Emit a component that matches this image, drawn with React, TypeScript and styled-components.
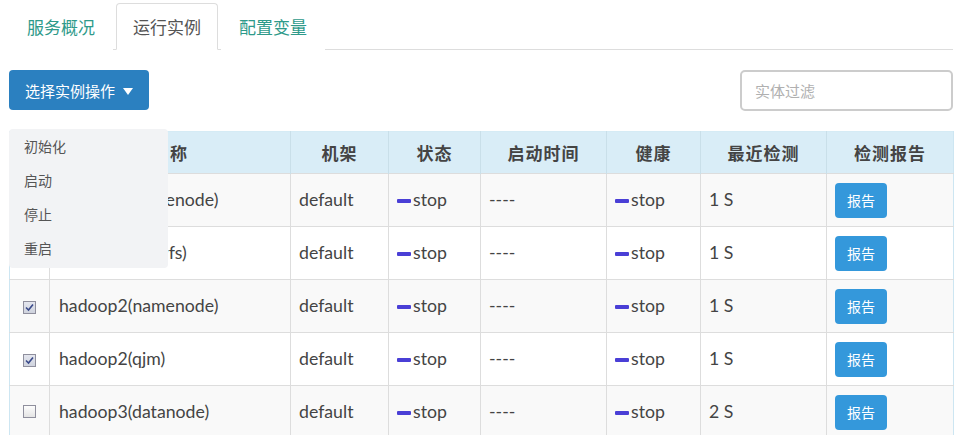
import React from "react";
import styled, { createGlobalStyle } from "styled-components";

const Global = createGlobalStyle`
  html, body { margin: 0; padding: 0; background: #fff; }
  body { font-family: Lato, "Noto Sans CJK SC", sans-serif; color: #333; }
  * { box-sizing: border-box; }
`;

const Page = styled.div`
  padding: 3px 2px 0 9px;
  width: 955px;
`;

const TabBar = styled.div`
  display: flex;
  gap: 3px;
  border-bottom: 1px solid #ddd;
  height: 47px;
`;

const Tab = styled.div<{ $active?: boolean; $width: number }>`
  width: ${(p) => p.$width}px;
  height: 47px;
  display: flex;
  align-items: center;
  justify-content: center;
  font-size: 17px;
  font-family: "Noto Sans CJK SC", sans-serif;
  color: ${(p) => (p.$active ? "#555" : "#2e9a8a")};
  border: 1px solid ${(p) => (p.$active ? "#ddd" : "transparent")};
  border-bottom-color: ${(p) => (p.$active ? "#fff" : "transparent")};
  border-radius: 4px 4px 0 0;
  background: #fff;
  margin-bottom: -1px;
  padding-bottom: 1px;
`;

const Toolbar = styled.div`
  position: relative;
  display: flex;
  justify-content: space-between;
  align-items: flex-start;
  margin-top: 20px;
`;

const ActionButton = styled.button`
  height: 40px;
  width: 140px;
  border: none;
  border-radius: 4px;
  background: #2b80c0;
  color: #fff;
  font-family: "Noto Sans CJK SC", sans-serif;
  font-size: 15px;
  display: flex;
  align-items: center;
  padding: 0 0 0 16px;
  gap: 8px;
`;

const Caret = styled.span`
  width: 0;
  height: 0;
  border-left: 5.5px solid transparent;
  border-right: 5.5px solid transparent;
  border-top: 7px solid #fff;
  margin-top: 2px;
`;

const FilterInput = styled.input`
  width: 213px;
  height: 41px;
  border: 2px solid #ccc;
  border-radius: 5px;
  padding: 0 13px;
  font-size: 15px;
  font-family: "Noto Sans CJK SC", sans-serif;
  color: #555;
  outline: none;
  &::placeholder { color: #b0b0b0; }
`;

const Menu = styled.div`
  position: absolute;
  left: 0;
  top: 59px;
  width: 159px;
  height: 139px;
  background: #f2f3f5;
  border-radius: 4px;
  z-index: 5;
  display: flex;
  flex-direction: column;
`;

const MenuItem = styled.div`
  height: 34px;
  line-height: 34px;
  padding-left: 15px;
  font-size: 14px;
  font-family: "Noto Sans CJK SC", sans-serif;
  color: #555;
`;

const Table = styled.table`
  margin-top: 20px;
  width: 944px;
  border-collapse: collapse;
  table-layout: fixed;
  border-left: 1px solid #cde6f2;
  border-right: 1px solid #cde6f2;
  border-top: 1px solid #d5ebf5;
`;

const HeadCell = styled.th`
  height: 42px;
  background: #d9edf7;
  font-family: "Noto Sans CJK SC", sans-serif;
  font-weight: 700;
  font-size: 17px;
  letter-spacing: 1px;
  color: #444;
  text-align: center;
  border-left: 1px solid #c9dfe9;
  padding: 0;
  &:first-child { border-left: none; }
`;

const Row = styled.tr<{ $odd?: boolean }>`
  background: ${(p) => (p.$odd ? "#f9f9f9" : "#fff")};
`;

const Cell = styled.td<{ $center?: boolean }>`
  height: 53px;
  border: 1px solid #ddd;
  padding: 0 8px;
  font-size: 17.7px;
  line-height: 20px;
  color: #444;
  text-align: ${(p) => (p.$center ? "center" : "left")};
  vertical-align: middle;
  &:first-child { border-left: none; }
  &:last-child { border-right: none; }
`;

const NameCell = styled(Cell)`
  padding-left: 9px;
`;

const Box = styled.span<{ $checked?: boolean }>`
  display: inline-flex;
  width: 13px;
  height: 13px;
  border: 1px solid #8f8f9d;
  background: ${(p) =>
    p.$checked ? "linear-gradient(#e4e6ee, #cfd3de)" : "linear-gradient(#fdfdfd, #e4e4e4)"};
  align-items: center;
  justify-content: center;
  margin-top: 3px;
`;

const Bar = styled.span`
  display: inline-block;
  width: 14px;
  height: 4px;
  border-radius: 1px;
  background: #4a3fd6;
  margin-right: 2px;
  vertical-align: middle;
  position: relative;
  top: -1px;
`;

const ReportButton = styled.button`
  width: 52px;
  height: 35px;
  border: none;
  border-radius: 4px;
  background: #3498db;
  color: #fff;
  font-family: "Noto Sans CJK SC", sans-serif;
  font-size: 14px;
  padding: 0;
  display: block;
`;

const CheckBox = ({ checked }: { checked?: boolean }) => (
  <Box $checked={checked}>
    {checked && (
      <svg width="9" height="9" viewBox="0 0 9 9">
        <path d="M1 4.5 L3.5 7 L8 1.5" fill="none" stroke="#3a4a8a" strokeWidth="1.6" />
      </svg>
    )}
  </Box>
);

const StatusCell = () => (
  <Cell>
    <Bar />
    stop
  </Cell>
);

const rows = [
  { name: "hadoop1(namenode)", checked: false, last: "1 S" },
  { name: "hadoop1(viewfs)", checked: false, last: "1 S" },
  { name: "hadoop2(namenode)", checked: true, last: "1 S" },
  { name: "hadoop2(qjm)", checked: true, last: "1 S" },
  { name: "hadoop3(datanode)", checked: false, last: "2 S" },
];

const widths = [40, 241, 98, 92, 126, 94, 126, 127];
const heads = ["", "名称", "机架", "状态", "启动时间", "健康", "最近检测", "检测报告"];

export default function App() {
  return (
    <Page>
      <Global />
      <TabBar>
        <Tab $width={104}>服务概况</Tab>
        <Tab $width={102} $active>运行实例</Tab>
        <Tab $width={104}>配置变量</Tab>
      </TabBar>
      <Toolbar>
        <ActionButton>
          选择实例操作
          <Caret />
        </ActionButton>
        <FilterInput placeholder="实体过滤" />
        <Menu>
          <MenuItem>初始化</MenuItem>
          <MenuItem>启动</MenuItem>
          <MenuItem>停止</MenuItem>
          <MenuItem>重启</MenuItem>
        </Menu>
      </Toolbar>
      <Table>
        <colgroup>
          {widths.map((w, i) => (
            <col key={i} style={{ width: w }} />
          ))}
        </colgroup>
        <thead>
          <tr>
            {heads.map((h, i) => (
              <HeadCell key={i}>{h}</HeadCell>
            ))}
          </tr>
        </thead>
        <tbody>
          {rows.map((r, i) => (
            <Row key={i} $odd={i % 2 === 0}>
              <Cell $center>
                <CheckBox checked={r.checked} />
              </Cell>
              <NameCell>{r.name}</NameCell>
              <Cell>default</Cell>
              <StatusCell />
              <Cell>----</Cell>
              <StatusCell />
              <Cell>{r.last}</Cell>
              <Cell>
                <ReportButton>报告</ReportButton>
              </Cell>
            </Row>
          ))}
        </tbody>
      </Table>
    </Page>
  );
}
